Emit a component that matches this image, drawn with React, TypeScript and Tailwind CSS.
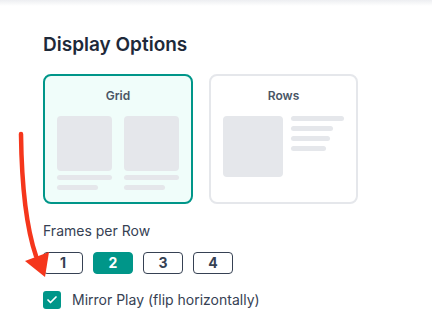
import { Check } from "lucide-react";

const frameOptions = [1, 2, 3, 4];

function Bar({ className }: { className: string }) {
  return <div className={`h-[5px] rounded-full bg-gray-200 ${className}`} />;
}

export default function App() {
  return (
    <div className="relative h-[321px] w-[432px] overflow-hidden bg-white font-['Inter',sans-serif]">
      {/* header shadow */}
      <div className="h-[6px] bg-gradient-to-b from-gray-200/70 to-white" />

      <div className="px-[43px] pt-[25px]">
        <h2 className="text-[19px] font-semibold leading-7 text-gray-800">Display Options</h2>

        {/* Layout cards */}
        <div className="mt-[15px] flex gap-4">
          <div className="flex h-[130px] w-[150px] flex-col gap-3 rounded-lg border-2 border-teal-600 bg-teal-50 px-3 pt-3">
            <div className="text-center text-xs font-semibold leading-4 text-gray-600">Grid</div>
            <div className="flex gap-3">
              {[0, 1].map((i) => (
                <div key={i} className="flex flex-1 flex-col gap-[5px]">
                  <div className="mb-[-1px] h-[55px] rounded bg-gray-200" />
                  <Bar className="w-full" />
                  <Bar className="w-3/4" />
                </div>
              ))}
            </div>
          </div>

          <div className="flex h-[130px] w-[149px] flex-col gap-3 rounded-lg border-2 border-gray-200 bg-white px-3 pt-3">
            <div className="text-center text-xs font-semibold leading-4 text-gray-600">Rows</div>
            <div className="flex gap-2">
              <div className="h-[61px] w-[61px] rounded bg-gray-200" />
              <div className="flex flex-1 flex-col gap-[5px]">
                <Bar className="w-[53px]" />
                <Bar className="w-[42px]" />
                <Bar className="w-[39px]" />
                <Bar className="w-[35px]" />
              </div>
            </div>
          </div>
        </div>

        <p className="mt-[17px] text-sm leading-5 text-gray-700">Frames per Row</p>
        <div className="mt-[11px] flex gap-[10px]">
          {frameOptions.map((n) => (
            <button
              key={n}
              className={
                n === 2
                  ? "h-[22px] w-10 rounded border border-teal-600 bg-teal-600 text-sm font-bold text-white"
                  : "h-[22px] w-10 rounded border border-gray-700 bg-white text-sm font-bold text-gray-700"
              }
            >
              {n}
            </button>
          ))}
        </div>

        <label className="mt-4 flex items-center gap-[11px]">
          <span className="flex h-[18px] w-[18px] items-center justify-center rounded-[3px] bg-teal-600">
            <Check className="h-3 w-3 text-white" strokeWidth={3.5} />
          </span>
          <span className="text-sm leading-5 text-gray-700">Mirror Play (flip horizontally)</span>
        </label>
      </div>

      {/* annotation arrow */}
      <svg className="pointer-events-none absolute left-0 top-0" width="432" height="321">
        <path d="M21 134 Q 22 215 36 256" fill="none" stroke="#f5361c" strokeWidth="4.5" strokeLinecap="round" />
        <polygon points="25,261 49,252 45,277" fill="#f5361c" />
      </svg>
    </div>
  );
}
